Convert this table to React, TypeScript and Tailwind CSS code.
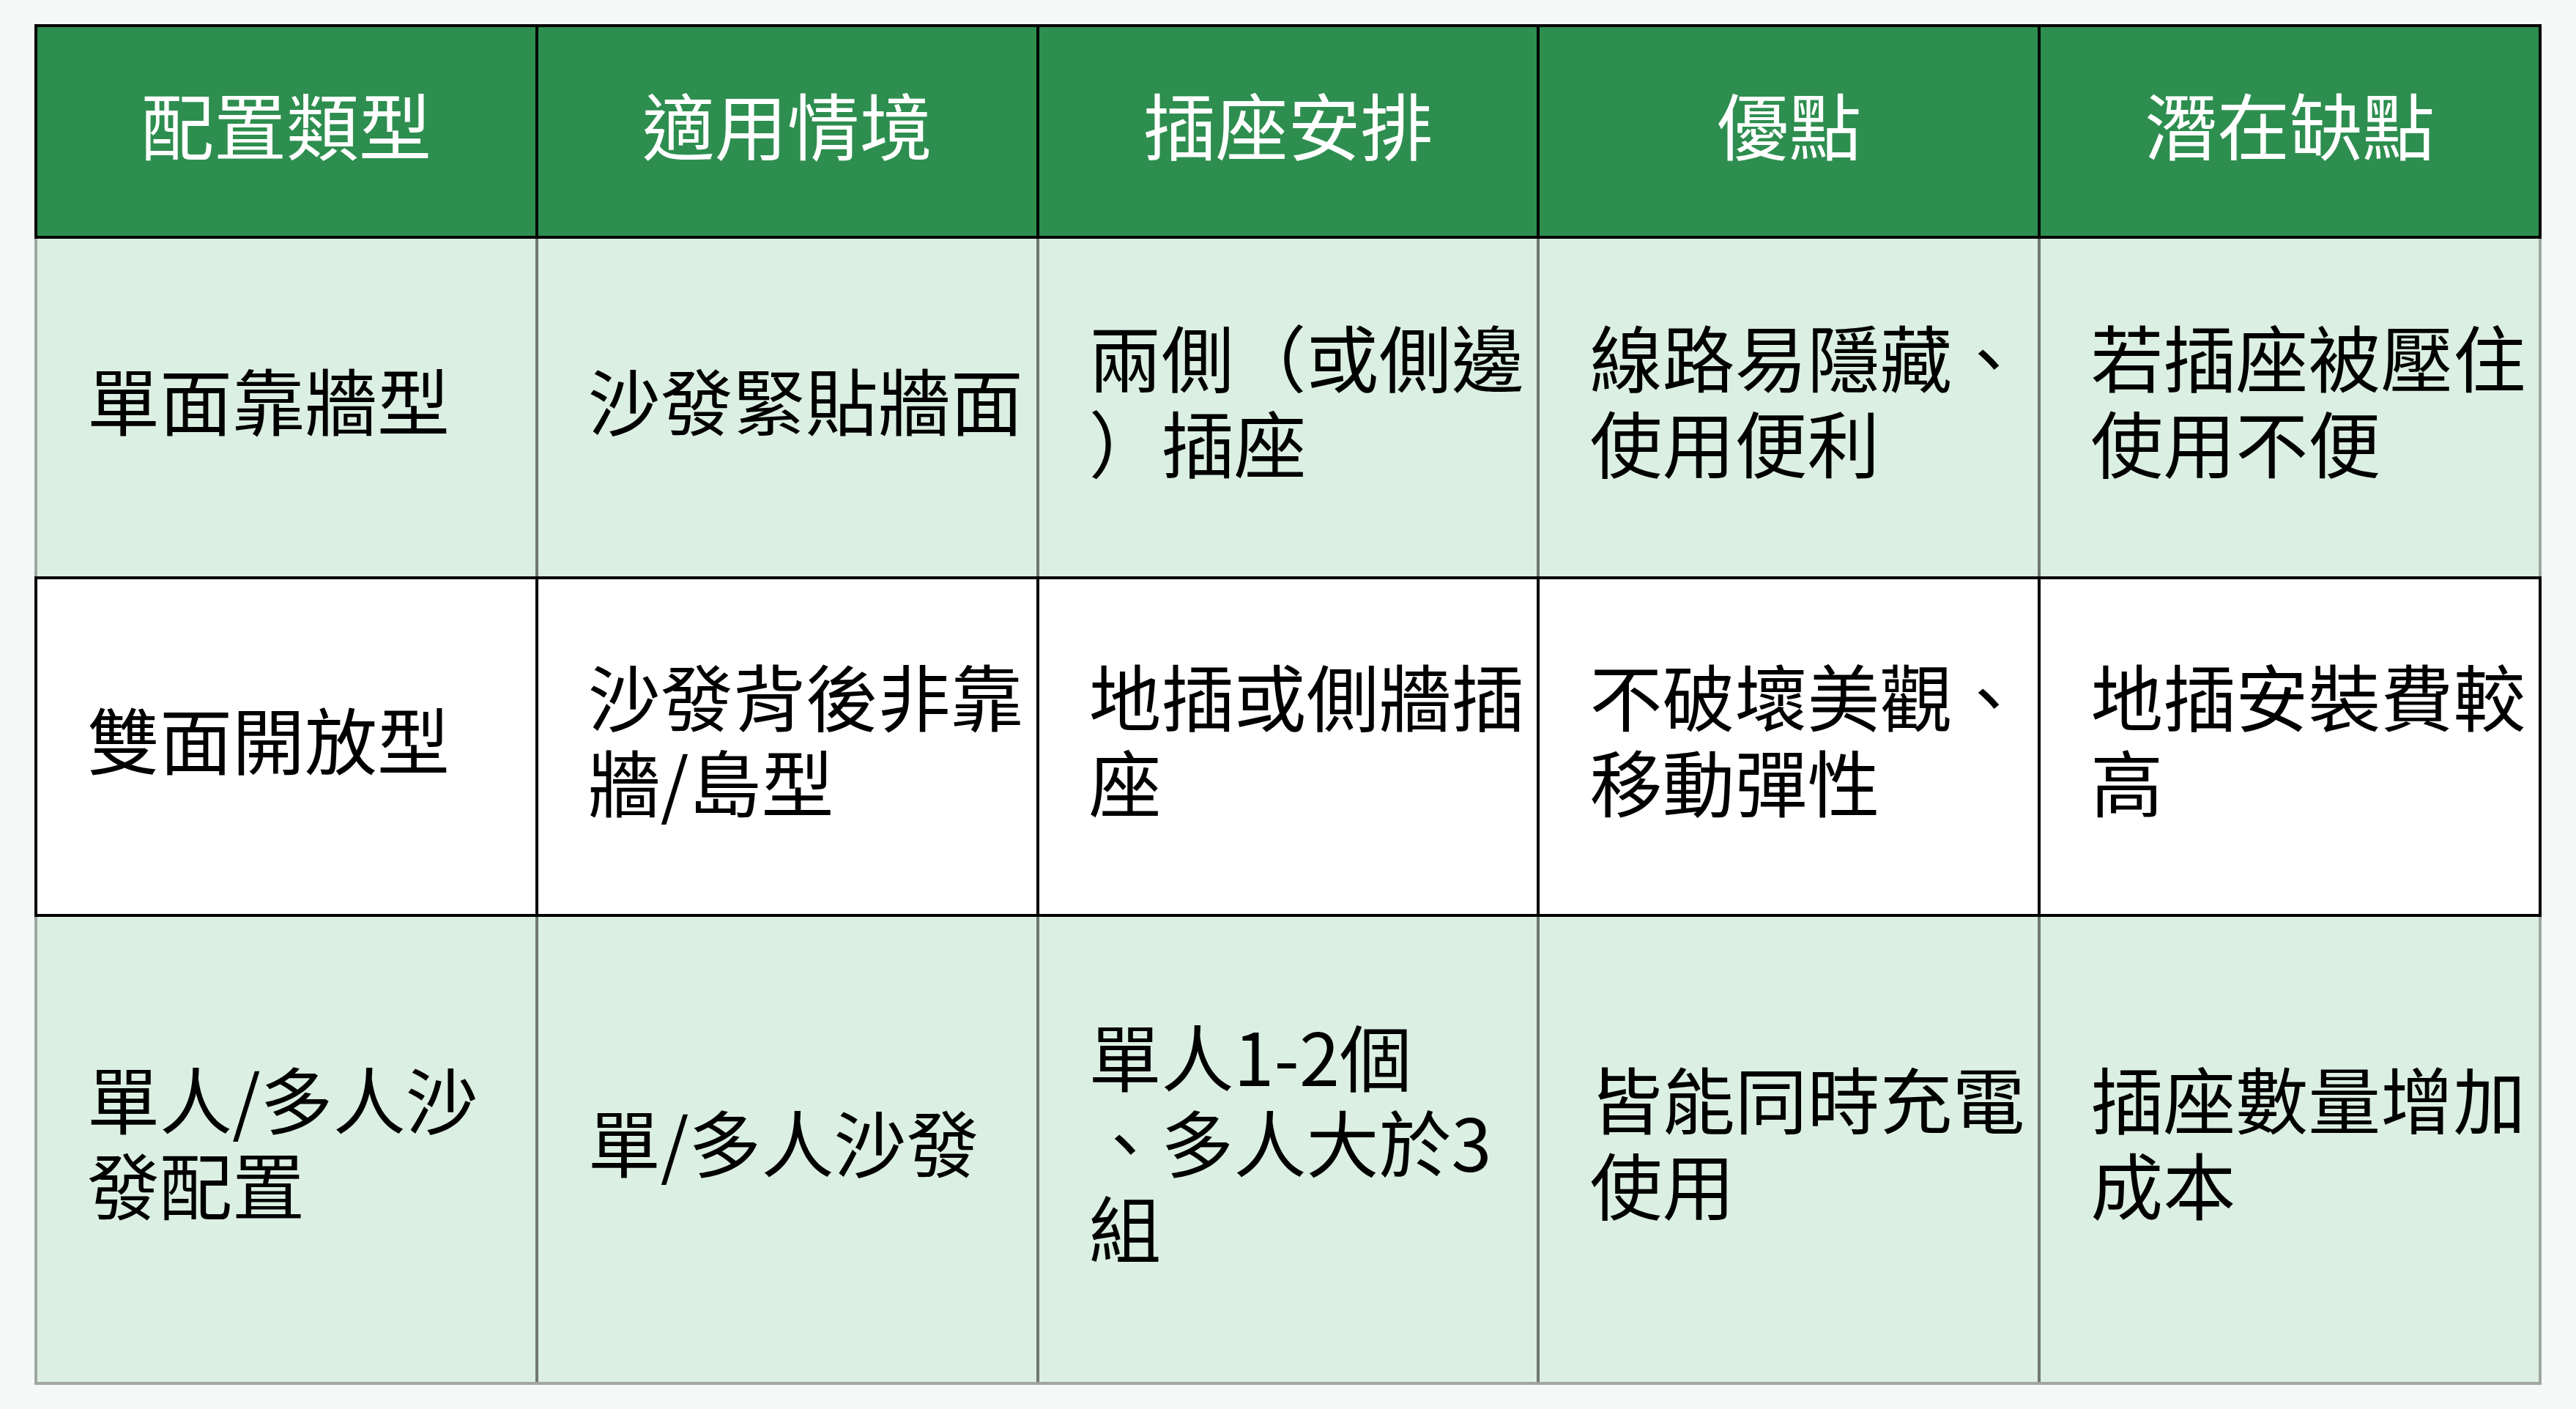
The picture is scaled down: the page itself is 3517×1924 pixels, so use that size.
const headers = ["配置類型", "適用情境", "插座安排", "優點", "潛在缺點"];

type Row = {
  tone: "green" | "white";
  height: string;
  cells: string[][];
};

const rows: Row[] = [
  {
    tone: "green",
    height: "h-[461px]",
    cells: [
      ["單面靠牆型"],
      ["沙發緊貼牆面"],
      ["兩側（或側邊", "）插座"],
      ["線路易隱藏、", "使用便利"],
      ["若插座被壓住", "使用不便"],
    ],
  },
  {
    tone: "white",
    height: "h-[465px]",
    cells: [
      ["雙面開放型"],
      ["沙發背後非靠", "牆/島型"],
      ["地插或側牆插", "座"],
      ["不破壞美觀、", "移動彈性"],
      ["地插安裝費較", "高"],
    ],
  },
  {
    tone: "green",
    height: "h-[639px]",
    cells: [
      ["單人/多人沙", "發配置"],
      ["單/多人沙發"],
      ["單人1-2個", "、多人大於3", "組"],
      ["皆能同時充電", "使用"],
      ["插座數量增加", "成本"],
    ],
  },
];

const Cell = ({ lines, first, tone }: { lines: string[]; first: boolean; tone: Row["tone"] }) => (
  <div
    className={`flex-1 min-w-0 flex items-center pl-[68px] pr-2 pb-[25px] ${
      first ? "" : tone === "white" ? "border-l-4 border-black" : "border-l-4 border-[#6f7672]"
    }`}
  >
    <div className="flex flex-col">
      {lines.map((line, i) => (
        <span key={i} className="whitespace-nowrap">
          {line}
        </span>
      ))}
    </div>
  </div>
);

const App = () => {
  return (
    <div
      className="min-h-screen w-full bg-[#f4f8f7] pt-[33px] pl-[47px]"
      style={{ fontFamily: '"Noto Sans CJK TC", "Noto Sans", sans-serif' }}
    >
      <div className="w-[3423px] text-[99px] leading-[117px] text-black">
        {/* header */}
        <div className="flex h-[293px] border-4 border-black bg-[#2e8e4f] text-white">
          {headers.map((h, i) => (
            <div
              key={h}
              className={`flex-1 min-w-0 flex items-center justify-center pb-[22px] ${
                i === 0 ? "" : "border-l-4 border-black"
              }`}
            >
              {h}
            </div>
          ))}
        </div>

        {rows.map((row, r) => (
          <div
            key={r}
            className={`flex ${row.height} ${
              row.tone === "white"
                ? "bg-white border-4 border-black"
                : `bg-[#dbefe2] border-x-4 border-[#a0a6a2] ${r === rows.length - 1 ? "border-b-4" : ""}`
            }`}
          >
            {row.cells.map((lines, c) => (
              <Cell key={c} lines={lines} first={c === 0} tone={row.tone} />
            ))}
          </div>
        ))}
      </div>
    </div>
  );
};

export default App;
